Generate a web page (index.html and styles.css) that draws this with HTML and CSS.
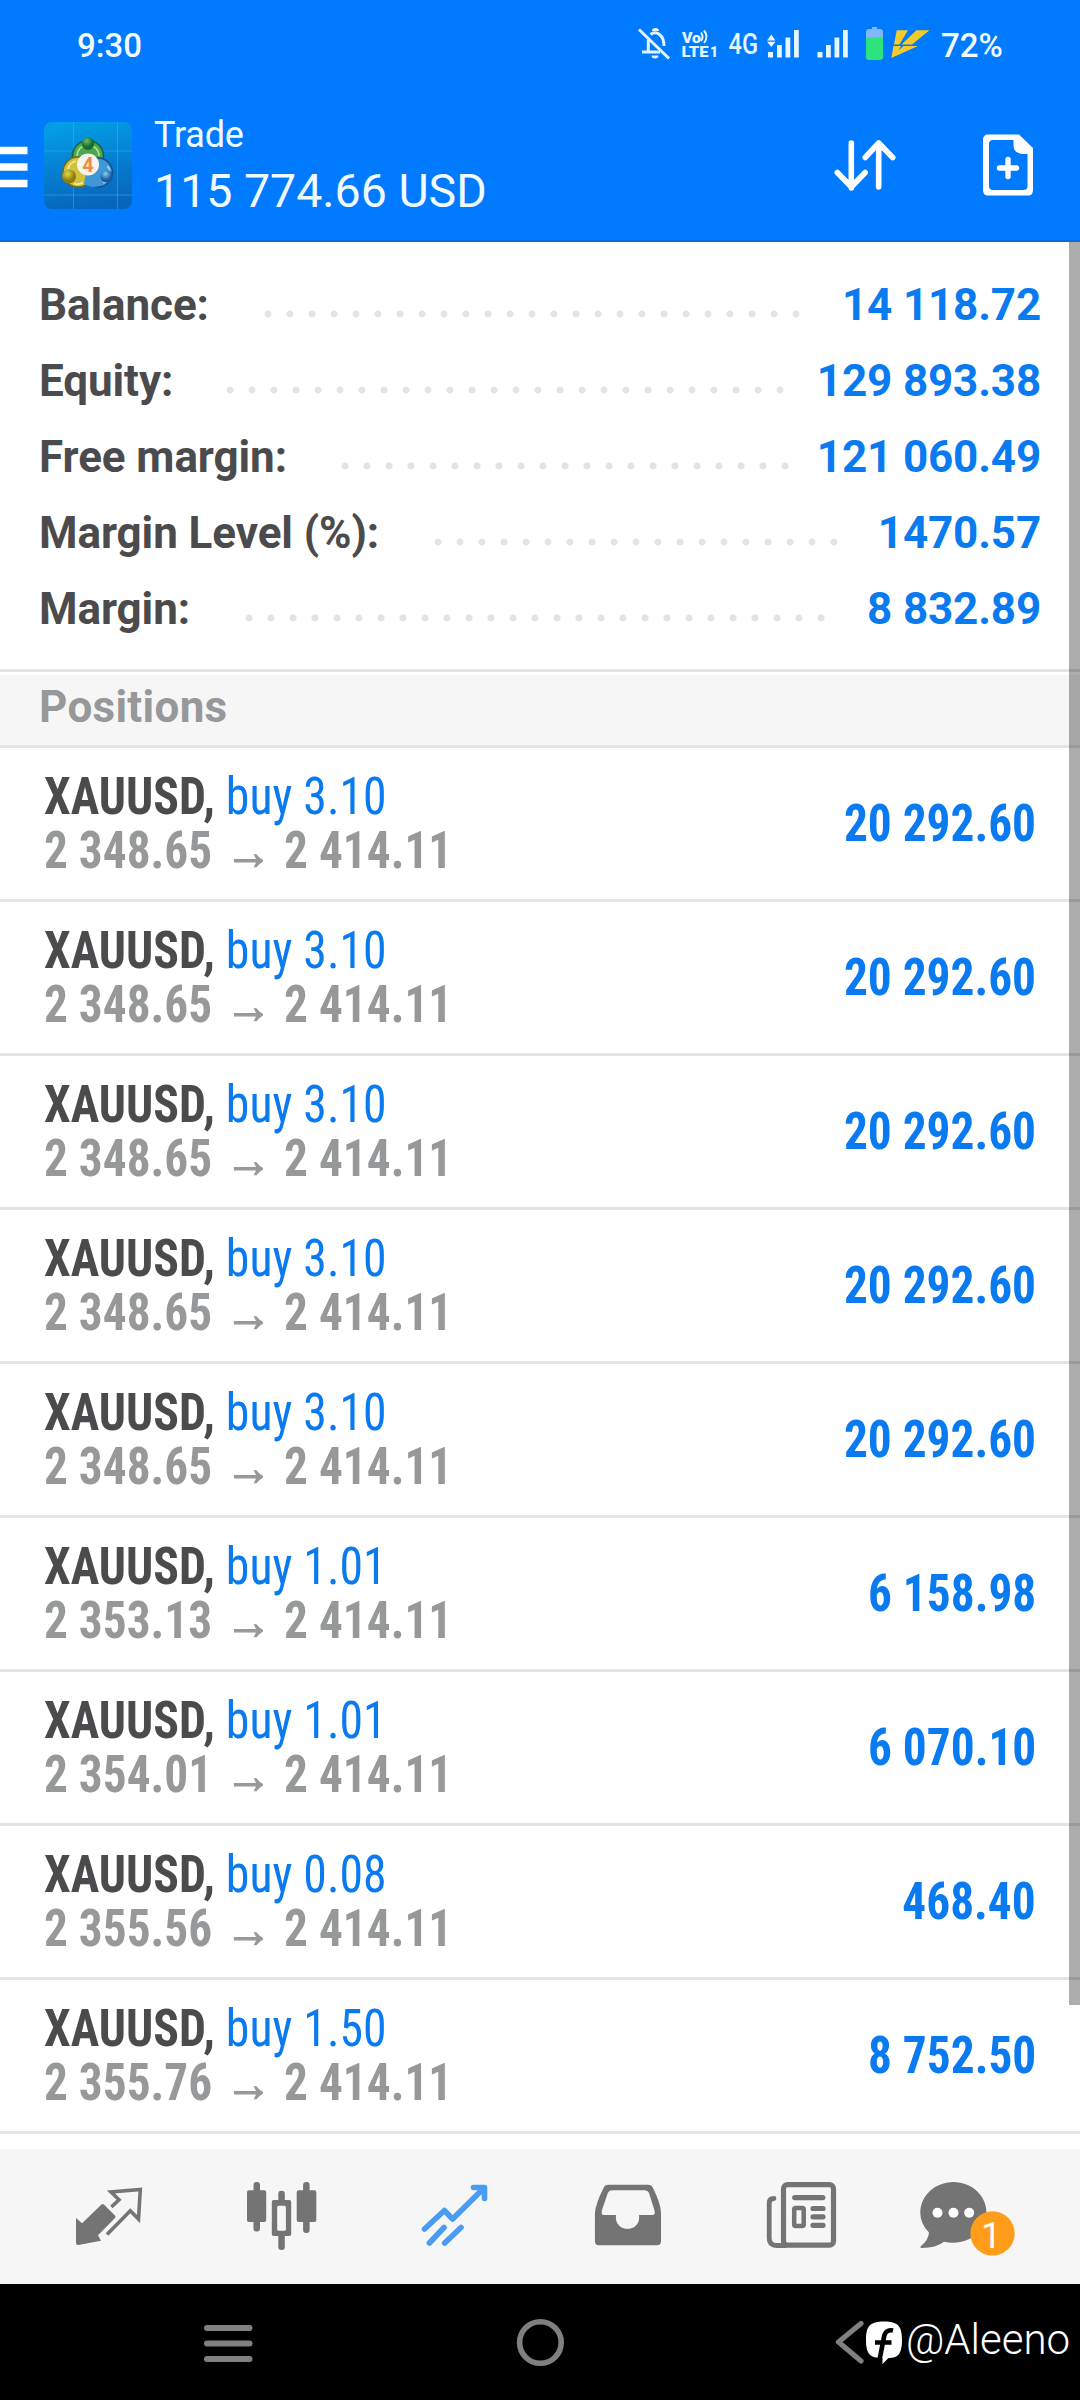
FILE: index.html
```html
<!DOCTYPE html>
<html lang="en">
<head>
<meta charset="utf-8">
<title>Trade</title>
<link rel="stylesheet" href="styles.css">
</head>
<body>
<div class="screen">
  <header class="header">
    <div class="status">
      <span class="clock">9:30</span>
      <svg class="status-icons" viewBox="630 0 310 80" width="310" height="80">
        <g fill="none" stroke="#e6f6ff" stroke-width="3">
          <path d="M639 29.500 669 58.500"/>
          <path d="M648.300 39.500V51.500M642 52H660M650.500 34.500Q655 31 659.500 34.500Q664 38 664 46"/>
          <path d="M701 32.500Q704 36.500 701 41M704 30.500Q709 36.500 704 43" stroke-width="2"/>
        </g>
        <path d="M652 31a3.500 3 0 0 1 7 0zM651.500 55.500h7a3.500 3 0 0 1-7 0z" fill="#e6f6ff"/>
        <g fill="#e6f6ff">
          <text class="volte" x="682" y="42.500" textLength="19" lengthAdjust="spacingAndGlyphs">Vo</text>
          <text class="volte" x="681.500" y="57.300" textLength="27" lengthAdjust="spacingAndGlyphs">LTE</text>
          <text class="volte" x="710" y="57.300" textLength="8" lengthAdjust="spacingAndGlyphs">1</text>
          <text class="net" x="728.500" y="54" textLength="29.500" lengthAdjust="spacingAndGlyphs">4G</text>
          <path d="M771.300 34.500 775.500 40.500H767zM771.300 47 775.500 41.800H767z"/>
          <path d="M768 52h5v5.500h-5zM777 45h4.800v12.500H777zM785.500 37.500h4.800v20h-4.800zM794 30h4.800v27.500H794z"/>
          <path d="M817.500 52h5v5.500h-5zM826 45h4.800v12.500H826zM834.500 37.500h4.800v20h-4.800zM843 30h4.800v27.500H843z"/>
        </g>
        <path d="M866 38V32q0-3 3-3h3v-2h5v2h3q3 0 3 3v6z" fill="#80b8f8"/>
        <path d="M866 37.500h17V57q0 3-3 3H869q-3 0-3-3z" fill="#2de37e"/>
        <path d="M896.700 30.300H908L899.500 44.500H894zM916.500 30.300H929.500L912 44.500H901.500zM893.500 46H901L898.500 50.500 903.500 46H918L891.300 58z" fill="#f4cb29"/>
      </svg>
      <span class="charge">72%</span>
    </div>
    <div class="appbar">
      <svg class="menu" viewBox="0 80 28 160" width="28" height="160"><path d="M0 146.700h27.500v7.500H0zM0 163.300h27.500v7.500H0zM0 179.800h27.500v7.400H0z" fill="#fff"/></svg>
      <svg class="logo" viewBox="0 0 88 87" width="88" height="87">
        <defs>
          <linearGradient id="bg" x1="0.300" y1="0" x2="0.500" y2="1"><stop offset="0" stop-color="#039fe6"/><stop offset="0.500" stop-color="#0480d2"/><stop offset="1" stop-color="#0765bb"/></linearGradient>
          <radialGradient id="gr" cx="0.400" cy="0.300"><stop offset="0" stop-color="#68bd72"/><stop offset="1" stop-color="#146b2c"/></radialGradient>
          <radialGradient id="ye" cx="0.400" cy="0.300"><stop offset="0" stop-color="#e6d84c"/><stop offset="1" stop-color="#8f7c10"/></radialGradient>
          <radialGradient id="bl" cx="0.400" cy="0.300"><stop offset="0" stop-color="#86cdf4"/><stop offset="1" stop-color="#155a9c"/></radialGradient>
        </defs>
        <rect width="88" height="87" rx="8" fill="url(#bg)"/>
        <path d="M29.500 0V87M73.500 0V87M0 29H88M0 73H88" stroke="#47b5f3" stroke-opacity="0.450"/>
        <circle cx="44" cy="34" r="15.500" fill="#4aa650" stroke="#205f38" stroke-width="1.500"/>
        <path d="M33 34a11 11 0 0 1 22 0" fill="none" stroke="#a5dc8c" stroke-width="1.800"/>
        <circle cx="54" cy="50.500" r="14.500" fill="#3f97d8" stroke="#174f86" stroke-width="1.500"/>
        <path d="M63.500 44a11 11 0 0 1-14 16.500" fill="none" stroke="#9bd6f6" stroke-width="1.800"/>
        <circle cx="34" cy="50" r="15" fill="#d0c23c" stroke="#6d6b24" stroke-width="1.500"/>
        <path d="M24 47a11 11 0 0 1 8-8M30 61.500q5 1.500 9-1" fill="none" stroke="#f3ec8c" stroke-width="1.800"/>
        <path d="M42 50 40 62Q50 68 60 62L50 48z" fill="#3f97d8"/>
        <circle cx="44" cy="21.500" r="6.300" fill="url(#gr)"/><circle cx="25" cy="54.500" r="7" fill="url(#ye)"/><circle cx="62.800" cy="54.300" r="6.300" fill="url(#bl)"/>
        <circle cx="44" cy="42.500" r="11" fill="#f7f3ee"/>
        <text class="four" x="44" y="49.500" text-anchor="middle">4</text>
      </svg>
      <div class="account"><div class="title">Trade</div><div class="amount">115 774.66 USD</div></div>
      <svg class="sort" viewBox="831 80 68 160" width="68" height="160"><path d="M851.300 143V188M837.300 172.500 851.300 187 865.200 172.500M878.700 187V143M865.200 157.500 878.700 143 892.700 157.500" fill="none" stroke="#fff" stroke-width="5.600" stroke-linecap="round" stroke-linejoin="round"/></svg>
      <svg class="new" viewBox="980 80 56 160" width="56" height="160"><path fill-rule="evenodd" fill="#fff" d="M988 134.500H1019L1033 148V190q0 5.500-5 5.500H988q-5 0-5-5.500V140q0-5.500 5-5.500zM993 140q-4 0-4 4V186q0 4 4 4H1023.500q4 0 4-4V154H1022q-8.500-1-8.500-9V140z"/><path d="M999.500 168H1016.500M1008 159.500V176.500" stroke="#fff" stroke-width="5.400" stroke-linecap="round"/></svg>
    </div>
  </header>

  <main class="content">
    <section class="summary">
      <div class="line"><span class="label">Balance:</span><span class="leader" style="width:550px;margin-right:35px"></span><span class="value">14 118.72</span></div>
      <div class="line"><span class="label">Equity:</span><span class="leader" style="width:572px;margin-right:26px"></span><span class="value">129 893.38</span></div>
      <div class="line"><span class="label">Free margin:</span><span class="leader" style="width:462px;margin-right:21px"></span><span class="value">121 060.49</span></div>
      <div class="line"><span class="label">Margin Level (%):</span><span class="leader" style="width:418px;margin-right:33px"></span><span class="value">1470.57</span></div>
      <div class="line"><span class="label">Margin:</span><span class="leader" style="width:594px;margin-right:35px"></span><span class="value">8 832.89</span></div>
    </section>
    <h2 class="section">Positions</h2>
    <ul class="positions">
      <li class="position"><div class="info"><div class="deal"><b>XAUUSD,</b> <span class="side">buy 3.10</span></div><div class="prices">2 348.65 <i>→</i> 2 414.11</div></div><div class="profit">20 292.60</div></li>
      <li class="position"><div class="info"><div class="deal"><b>XAUUSD,</b> <span class="side">buy 3.10</span></div><div class="prices">2 348.65 <i>→</i> 2 414.11</div></div><div class="profit">20 292.60</div></li>
      <li class="position"><div class="info"><div class="deal"><b>XAUUSD,</b> <span class="side">buy 3.10</span></div><div class="prices">2 348.65 <i>→</i> 2 414.11</div></div><div class="profit">20 292.60</div></li>
      <li class="position"><div class="info"><div class="deal"><b>XAUUSD,</b> <span class="side">buy 3.10</span></div><div class="prices">2 348.65 <i>→</i> 2 414.11</div></div><div class="profit">20 292.60</div></li>
      <li class="position"><div class="info"><div class="deal"><b>XAUUSD,</b> <span class="side">buy 3.10</span></div><div class="prices">2 348.65 <i>→</i> 2 414.11</div></div><div class="profit">20 292.60</div></li>
      <li class="position"><div class="info"><div class="deal"><b>XAUUSD,</b> <span class="side">buy 1.01</span></div><div class="prices">2 353.13 <i>→</i> 2 414.11</div></div><div class="profit">6 158.98</div></li>
      <li class="position"><div class="info"><div class="deal"><b>XAUUSD,</b> <span class="side">buy 1.01</span></div><div class="prices">2 354.01 <i>→</i> 2 414.11</div></div><div class="profit">6 070.10</div></li>
      <li class="position"><div class="info"><div class="deal"><b>XAUUSD,</b> <span class="side">buy 0.08</span></div><div class="prices">2 355.56 <i>→</i> 2 414.11</div></div><div class="profit">468.40</div></li>
      <li class="position"><div class="info"><div class="deal"><b>XAUUSD,</b> <span class="side">buy 1.50</span></div><div class="prices">2 355.76 <i>→</i> 2 414.11</div></div><div class="profit">8 752.50</div></li>
    </ul>
    <div class="scrollbar"></div>
  </main>

  <nav class="tabs">
    <svg viewBox="21.500 2149 173 135"><path d="M75.500 2218 81.600 2223.300 101 2204.500q1.200-1 2.400 0L114.500 2215.500q1 1.200 0 2.400L97.500 2235.300 100.500 2240.700 78 2245q-2.500.3-2.500-2.500z" fill="#747474"/><path d="M110.900 2207 118.500 2199.700 110.500 2192 139.800 2189.500 138 2219 129.800 2210.700 106.500 2234.500" fill="none" stroke="#747474" stroke-width="3.600"/></svg>
    <svg viewBox="194.500 2149 173 135"><g fill="#747474"><rect x="246.500" y="2190.300" width="19.200" height="31.700" rx="2"/><rect x="253" y="2182" width="6.500" height="49.500" rx="3"/><rect x="277.800" y="2190.700" width="6.500" height="59.300" rx="3"/><rect x="271.300" y="2200" width="19.400" height="36" rx="2"/><rect x="296.200" y="2190.300" width="19.600" height="31.700" rx="2"/><rect x="302.600" y="2182" width="6.500" height="51" rx="3"/></g><rect x="276.700" y="2205.700" width="8.700" height="25" rx="1.500" fill="#f6f6f6"/></svg>
    <svg viewBox="367.500 2149 173 135"><path d="M424 2229 443.900 2210.500 452.100 2219 482.500 2189M473 2187.500H484V2198.500M428.900 2243 443.500 2227.500M444.200 2243 460.500 2227.500" fill="none" stroke="#4a9bf2" stroke-width="5.600" stroke-linecap="round" stroke-linejoin="round"/></svg>
    <svg viewBox="540.500 2149 173 135"><path fill-rule="evenodd" fill="#747474" d="M608 2184.700H647.500q3.500 0 5 3.200Q660.500 2204 660.500 2213V2241q0 4.300-4 4.300H598.400q-4 0-4-4.300V2213Q595 2204 603 2187.900q1.500-3.200 5-3.200zM611.500 2190.300q-3 0-4.200 2.700L601.500 2210q-1.200 5 1.500 5H615.400V2218a11.600 10.800 0 0 0 23.200 0V2215H652q3 0 2-4.500L648.500 2193q-1.200-2.700-4-2.700z"/></svg>
    <svg viewBox="713.500 2149 173 135"><g fill="none" stroke="#747474" stroke-linecap="round"><rect x="783" y="2184.700" width="50" height="60.500" rx="4" stroke-width="5.200"/><path d="M773.500 2198.500Q768.700 2198.500 768.700 2203V2238Q768.700 2245.500 776 2245.500H785" stroke-width="4.800"/><path d="M794.200 2197.600H822.300M812.500 2208.500H822.500M812.500 2216.800H822.500M812.500 2225.300H822.500" stroke-width="5.200"/><rect x="793.700" y="2208" width="9.500" height="18" rx="1.500" stroke-width="4.500"/></g></svg>
    <svg viewBox="886.500 2149 173 135"><path d="M953 2182C971.500 2182 986 2196 986 2212.500S971.500 2242.700 953 2242.700Q948 2242.700 943.500 2241.800 935 2248.300 920.500 2248q-1.500-.6 0-2Q928 2240 928.500 2232.500 919.800 2224 919.800 2212.500C919.800 2196 934.500 2182 953 2182z" fill="#747474"/><g fill="#fff"><circle cx="937" cy="2212.700" r="5"/><circle cx="953" cy="2212.700" r="5"/><circle cx="968.700" cy="2212.700" r="5"/></g><circle cx="992" cy="2233.400" r="22.200" fill="#ff9c1a"/><text class="badge" x="990.500" y="2247.500" text-anchor="middle">1</text></svg>
  </nav>

  <footer class="sysnav">
    <svg class="recents" viewBox="198 2284 60 116" width="60" height="116"><path d="M207 2328H249.500M207 2343.500H249.500M207 2359H249.500" stroke="#808080" stroke-width="6" stroke-linecap="round"/></svg>
    <svg class="home" viewBox="510 2284 60 116" width="60" height="116"><circle cx="540.400" cy="2342.500" r="20.800" fill="none" stroke="#808080" stroke-width="5.600"/></svg>
    <svg class="back" viewBox="830 2284 76 116" width="76" height="116"><path d="M861 2323.500 838.500 2342 861 2361" fill="none" stroke="#808080" stroke-width="5.200" stroke-linecap="round" stroke-linejoin="round"/><path d="M884 2321.500C898 2321.500 902 2326 902 2340S898 2358 888.500 2358L882.500 2364V2358C870 2358 866 2354 866 2340S870 2321.500 884 2321.500z" fill="#fff"/><path d="M893 2330.500Q885.500 2328.800 884 2337L879.500 2360M875 2342.500H891.500" fill="none" stroke="#000" stroke-width="4.600"/></svg>
    <span class="handle">@Aleeno</span>
  </footer>
</div>
</body>
</html>
```
FILE: styles.css
```css
* { box-sizing: border-box; }
body { margin: 0; font-family: Roboto, sans-serif; background: #fff; }
svg { display: block; flex: none; }
.screen { display: flex; flex-direction: column; width: 1080px; height: 2400px; overflow: hidden; }

.header { flex: none; height: 242px; background: #007aff; border-bottom: 2px solid #0f6bd0; color: #f0fcff; }
.status { display: flex; height: 80px; padding-left: 77px; font-size: 33px; font-weight: 500; line-height: 91px; }
.clock { width: 553px; }
.charge { margin-left: 1px; }
.volte { font-size: 15.500px; font-weight: 900; }
.net { font-size: 29px; }
.appbar { display: flex; height: 160px; }
.logo { margin: 42px 0 0 16px; }
.four { font-size: 20px; font-weight: 700; fill: #f08a3c; }
.account { width: 500px; padding: 32px 0 0 22px; white-space: nowrap; }
.title { font-size: 36px; line-height: 46px; letter-spacing: -0.200px; }
.amount { font-size: 46.500px; line-height: 66px; }
.sort { margin-left: 199px; }
.new { margin-left: 81px; }

.content { position: relative; flex: none; height: 1907px; background: #fff; }
.summary { height: 430px; padding: 25px 39px 0; border-bottom: 3px solid #e4e4e4; font-size: 44px; font-weight: 700; }
.line { display: flex; align-items: center; height: 76px; line-height: 76px; white-space: nowrap; }
.label { color: #4b4b4d; letter-spacing: -0.080px; }
.leader { height: 8px; margin: 18px 0 0 auto; background: radial-gradient(circle at 11px 4px, #e4e4e4 3px, transparent 4px) 0 0 / 22px 8px repeat-x; }
.value { color: #0a7af0; letter-spacing: -0.150px; }
.section { height: 73px; margin: 3px 0 0; padding: 0 39px; border-bottom: 3px solid #e4e4e4; background: #f6f6f6; color: #969899; font-size: 44px; font-weight: 700; line-height: 64px; letter-spacing: 0.300px; }

.positions { margin: 0; padding: 0; list-style: none; }
.position { display: flex; justify-content: space-between; height: 154px; padding: 22px 44px 0; border-bottom: 3px solid #e4e4e4; font-size: 51px; font-stretch: 75%; line-height: 54px; white-space: nowrap; }
.deal { transform: scaleX(0.936); transform-origin: left; color: #4b4b4d; }
.side { color: #0a7af0; }
.prices { transform: scaleX(0.928); transform-origin: left; color: #969899; font-weight: 700; }
.prices i { display: inline-block; height: 54px; margin: 0 1px 0 2px; padding-top: 1px; font-style: normal; line-height: 54px; vertical-align: top; -webkit-text-stroke: 1.200px #969899; }
.profit { padding-top: 27px; transform: scaleX(0.928); transform-origin: right; color: #0a7af0; font-weight: 700; }
.scrollbar { position: absolute; top: 0; right: 0; width: 11px; height: 1763px; background: rgba(0, 0, 0, 0.320); }

.tabs { display: grid; grid-template-columns: repeat(6, 173px); flex: none; height: 135px; padding-left: 21.500px; background: #f6f6f6; }
.badge { font-size: 36px; fill: #fff; }
.sysnav { display: flex; flex: none; height: 116px; background: #000; }
.recents { margin-left: 198px; }
.home { margin-left: 252px; }
.back { margin-left: 260px; }
.handle { color: #fff; font-size: 42px; font-weight: 350; line-height: 112px; }
```
